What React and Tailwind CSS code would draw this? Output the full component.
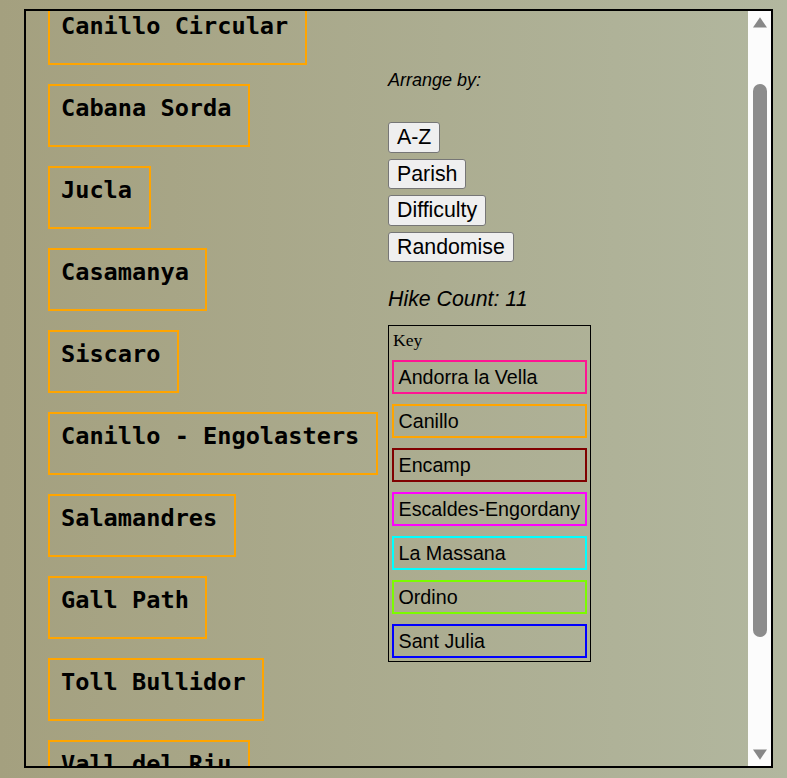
import React, { useLayoutEffect, useRef } from "react";

const hikes = [
  "Canillo Circular",
  "Cabana Sorda",
  "Jucla",
  "Casamanya",
  "Siscaro",
  "Canillo - Engolasters",
  "Salamandres",
  "Gall Path",
  "Toll Bullidor",
  "Vall del Riu",
  "Pic de la Coma",
];

const parishes = [
  { name: "Andorra la Vella", cls: "border-[#ff1493]" },
  { name: "Canillo", cls: "border-[#ffa500]" },
  { name: "Encamp", cls: "border-[#800000]" },
  { name: "Escaldes-Engordany", cls: "border-[#ff00ff]" },
  { name: "La Massana", cls: "border-[#00ffff]" },
  { name: "Ordino", cls: "border-[#7cfc00]" },
  { name: "Sant Julia", cls: "border-[#0000ff]" },
];

const buttons = ["A-Z", "Parish", "Difficulty", "Randomise"];

function Scrollbar() {
  return (
    <div className="w-[23px] shrink-0 bg-[#fcfcfc] flex flex-col items-center pt-[6px]">
      <svg width="14" height="11" viewBox="0 0 14 11" className="block">
        <path d="M7 0.3 L14 10.5 L0 10.5 Z" fill="#888888" />
      </svg>
      <div className="mt-[56px] w-[14px] h-[553px] rounded-full bg-[#8c8c8c]" />
      <svg width="14" height="11" viewBox="0 0 14 11" className="block mt-[112px]">
        <path d="M0 0.5 L14 0.5 L7 10.7 Z" fill="#888888" />
      </svg>
    </div>
  );
}

export default function App() {
  const ref = useRef(null);
  useLayoutEffect(() => {
    if (ref.current) ref.current.scrollTop = 68;
  }, []);

  return (
    <div className="h-[778px] w-full overflow-hidden bg-gradient-to-r from-[#a4a07f] to-[#b2b79f] pt-[9px] pl-[24px]">
      <div className="w-[749px] h-[759px] border-2 border-black flex">
        <div ref={ref} className="flex-1 min-w-0 h-full overflow-hidden">
          <div className="flex items-start pl-[22px] pt-[59px] pb-[26px]">
            <div className="w-[340px] shrink-0 flex flex-col items-start gap-[19px]">
              {hikes.map((h) => (
                <div
                  key={h}
                  className="border-2 border-[#ffa500] pl-[11px] pr-[16.5px] pt-[8.5px] pb-[23.5px]"
                >
                  <div className="font-['DejaVu_Sans_Mono',monospace] font-bold text-[23.6px] leading-[27px] text-black whitespace-pre">
                    {h}
                  </div>
                </div>
              ))}
            </div>
            <div className="flex flex-col items-start font-['Liberation_Sans',Arial,sans-serif] text-black">
              <div className="mt-[68px] italic text-[18px] leading-[21px]">Arrange by:</div>
              <div className="mt-[31px] flex flex-col items-start gap-[6px]">
                {buttons.map((b) => (
                  <button
                    key={b}
                    className="h-[30.5px] px-[8px] border border-[#767676] bg-[#efefef] rounded-[3px] text-[21.33px] leading-[24px] text-black"
                  >
                    {b}
                  </button>
                ))}
              </div>
              <div className="mt-[24.5px] italic text-[21.33px] leading-[24.5px]">Hike Count: 11</div>
              <div className="mt-[14px] border border-black p-[3px]">
                <div className="font-['Liberation_Serif',serif] text-[17.6px] leading-[20px] pt-[1px] pl-[1px]">Key</div>
                <div className="mt-[10px] flex flex-col gap-[10px]">
                  {parishes.map((p) => (
                    <div
                      key={p.name}
                      className={`border-2 ${p.cls} px-[4.5px] py-[3.5px] text-[19.7px] leading-[23px] text-black whitespace-nowrap`}
                    >
                      {p.name}
                    </div>
                  ))}
                </div>
              </div>
            </div>
          </div>
        </div>
        <Scrollbar />
      </div>
    </div>
  );
}
